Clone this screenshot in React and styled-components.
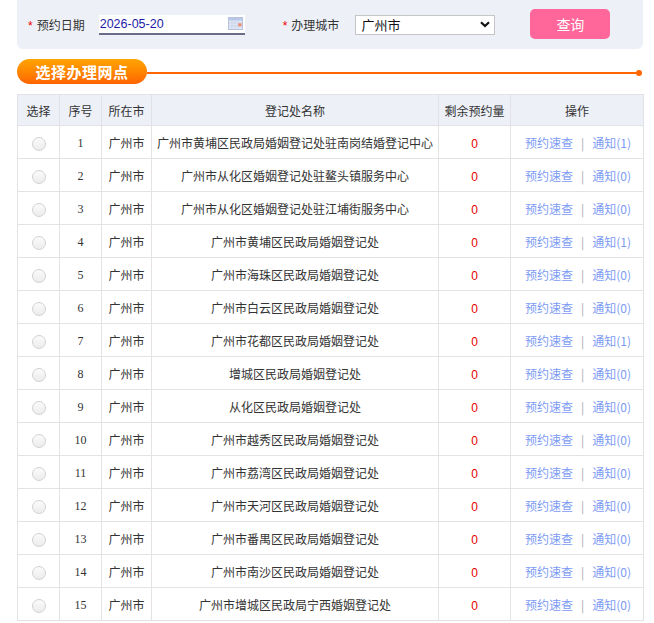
import React from "react";
import styled, { createGlobalStyle } from "styled-components";

const Global = createGlobalStyle`
  html, body { margin: 0; padding: 0; background: #fff; }
  body { font-family: "Liberation Sans", "Noto Sans CJK SC", sans-serif; color: #333; }
`;

const Page = styled.div`
  width: 626px;
  margin-left: 17px;
`;

const SearchPanel = styled.div`
  height: 49px;
  background: #edf0f7;
  border-radius: 0 0 6px 6px;
  display: flex;
  align-items: center;
  padding-left: 11px;
  box-sizing: border-box;
`;

const Field = styled.div`
  display: flex;
  align-items: center;
  margin-right: ${(p) => p.$gap}px;
`;

const Star = styled.span`
  color: #e00;
  font-size: 12px;
  font-family: "Liberation Sans", sans-serif;
  margin-right: 4px;
  line-height: 1;
  padding-top: 2px;
`;

const Label = styled.span`
  font-family: "Noto Sans CJK SC", sans-serif;
  font-size: 12px;
  color: #333;
  margin-right: ${(p) => p.$gap}px;
`;

const DateBox = styled.div`
  width: 146px;
  height: 18px;
  background: #fff;
  border-bottom: 2px solid #6c6c86;
  display: flex;
  align-items: center;
  justify-content: space-between;
  box-sizing: content-box;
`;

const DateInput = styled.input`
  border: none;
  outline: none;
  background: transparent;
  font-family: "Liberation Sans", sans-serif;
  font-size: 12.5px;
  color: #1c1ca8;
  width: 120px;
  padding: 0 0 0 1px;
  margin: 0;
`;

const SelectBox = styled.div`
  width: 140px;
  height: 20px;
  box-sizing: border-box;
  border: 1px solid #c5c5c5;
  background: #fff;
  display: flex;
  align-items: center;
  justify-content: space-between;
  padding: 0 4px 0 5px;
  font-family: "Noto Sans CJK SC", sans-serif;
  font-size: 13px;
  color: #111;
`;

const QueryButton = styled.button`
  width: 80px;
  height: 30px;
  border: none;
  border-radius: 5px;
  background: #ff6699;
  color: #fff;
  font-family: "Noto Sans CJK SC", sans-serif;
  font-size: 14px;
  margin-left: 35px;
  margin-top: -1px;
  cursor: pointer;
`;

const TitleRow = styled.div`
  display: flex;
  align-items: center;
  margin-top: 10px;
  height: 25px;
`;

const TitlePill = styled.div`
  width: 130px;
  height: 25px;
  border-radius: 13px;
  background: linear-gradient(to bottom, #ffa400 0%, #ff8a00 45%, #ff6400 100%);
  color: #fff;
  font-family: "Noto Sans CJK SC", sans-serif;
  font-weight: 700;
  font-size: 15px;
  display: flex;
  align-items: center;
  justify-content: center;
  flex-shrink: 0;
  letter-spacing: 0.5px;
`;

const TitleLine = styled.div`
  flex: 1;
  height: 2px;
  background: #ff6600;
  margin-top: 2px;
`;

const TitleDot = styled.div`
  width: 6px;
  height: 6px;
  border-radius: 50%;
  background: #ff6600;
  margin-top: 2px;
  margin-right: 1px;
`;

const Table = styled.table`
  width: 626px;
  margin-top: 10px;
  border-collapse: collapse;
  table-layout: fixed;
  font-family: "Noto Sans CJK SC", sans-serif;
  font-size: 12px;
  color: #333;
`;

const Th = styled.th`
  height: 30px;
  padding: 0;
  background: #edf0f7;
  border: 1px solid #e0e2e8;
  font-weight: 400;
  font-size: 12px;
  text-align: center;
`;

const Td = styled.td`
  height: 32px;
  padding: 0;
  border: 1px solid #e3e3e3;
  text-align: center;
  white-space: nowrap;
  overflow: hidden;
`;

const Num = styled.span`
  font-family: "Liberation Serif", serif;
  font-size: 12px;
`;

const Radio = styled.span`
  display: inline-block;
  width: 12px;
  height: 12px;
  border-radius: 50%;
  border: 1px solid #d2d2d2;
  background: linear-gradient(to bottom, #fbfbfb, #ececec);
  vertical-align: middle;
`;

const Remain = styled.span`
  color: #e60000;
  font-family: "Liberation Sans", sans-serif;
  font-size: 12px;
`;

const Ops = styled.div`
  display: flex;
  align-items: center;
  justify-content: center;
  gap: 8px;
  padding-left: 2px;
`;

const OpLink = styled.a`
  color: #7d9bf4;
  text-decoration: none;
  font-size: 12px;
  font-family: "Noto Sans CJK SC", sans-serif;
`;

const Sep = styled.span`
  color: #aaa;
  font-size: 12px;
`;

const CalendarIcon = () => (
  <svg width="15" height="13" viewBox="0 0 15 13" style={{ marginRight: 2 }}>
    <rect x="0.5" y="0.5" width="14" height="12" fill="#dfe6f4" stroke="#b7c3dc" />
    <rect x="1" y="1" width="13" height="2.5" fill="#b9c7e6" />
    {[4, 7, 10].map((x) => (
      <line key={"v" + x} x1={x} y1="3.5" x2={x} y2="12" stroke="#c9d3ea" strokeWidth="0.8" />
    ))}
    {[6, 9].map((y) => (
      <line key={"h" + y} x1="1" y1={y} x2="14" y2={y} stroke="#c9d3ea" strokeWidth="0.8" />
    ))}
    <rect x="10.3" y="6.3" width="3.2" height="3" fill="#f08a6c" />
  </svg>
);

const Chevron = () => (
  <svg width="10" height="7" viewBox="0 0 10 7">
    <path d="M1 1.2 L5 5 L9 1.2" fill="none" stroke="#111" strokeWidth="2.2" />
  </svg>
);

const rows = [
  ["广州市黄埔区民政局婚姻登记处驻南岗结婚登记中心", 1],
  ["广州市从化区婚姻登记处驻鳌头镇服务中心", 0],
  ["广州市从化区婚姻登记处驻江埔街服务中心", 0],
  ["广州市黄埔区民政局婚姻登记处", 1],
  ["广州市海珠区民政局婚姻登记处", 0],
  ["广州市白云区民政局婚姻登记处", 0],
  ["广州市花都区民政局婚姻登记处", 1],
  ["增城区民政局婚姻登记处", 0],
  ["从化区民政局婚姻登记处", 0],
  ["广州市越秀区民政局婚姻登记处", 0],
  ["广州市荔湾区民政局婚姻登记处", 0],
  ["广州市天河区民政局婚姻登记处", 0],
  ["广州市番禺区民政局婚姻登记处", 0],
  ["广州市南沙区民政局婚姻登记处", 0],
  ["广州市增城区民政局宁西婚姻登记处", 0],
];

export default function App() {
  return (
    <Page>
      <Global />
      <SearchPanel>
        <Field $gap={38}>
          <Star>*</Star>
          <Label $gap={14}>预约日期</Label>
          <DateBox>
            <DateInput readOnly value="2026-05-20" />
            <CalendarIcon />
          </DateBox>
        </Field>
        <Field $gap={0}>
          <Star>*</Star>
          <Label $gap={16}>办理城市</Label>
          <SelectBox>
            <span>广州市</span>
            <Chevron />
          </SelectBox>
        </Field>
        <QueryButton>查询</QueryButton>
      </SearchPanel>

      <TitleRow>
        <TitlePill>选择办理网点</TitlePill>
        <TitleLine />
        <TitleDot />
      </TitleRow>

      <Table>
        <colgroup>
          <col style={{ width: 42 }} />
          <col style={{ width: 42 }} />
          <col style={{ width: 50 }} />
          <col style={{ width: 287 }} />
          <col style={{ width: 72 }} />
          <col style={{ width: 133 }} />
        </colgroup>
        <thead>
          <tr>
            <Th>选择</Th>
            <Th>序号</Th>
            <Th>所在市</Th>
            <Th>登记处名称</Th>
            <Th>剩余预约量</Th>
            <Th>操作</Th>
          </tr>
        </thead>
        <tbody>
          {rows.map(([name, notify], i) => (
            <tr key={i}>
              <Td>
                <Radio />
              </Td>
              <Td>
                <Num>{i + 1}</Num>
              </Td>
              <Td>广州市</Td>
              <Td>{name}</Td>
              <Td>
                <Remain>0</Remain>
              </Td>
              <Td>
                <Ops>
                  <OpLink href="#">预约速查</OpLink>
                  <Sep>|</Sep>
                  <OpLink href="#">通知({notify})</OpLink>
                </Ops>
              </Td>
            </tr>
          ))}
        </tbody>
      </Table>
    </Page>
  );
}
